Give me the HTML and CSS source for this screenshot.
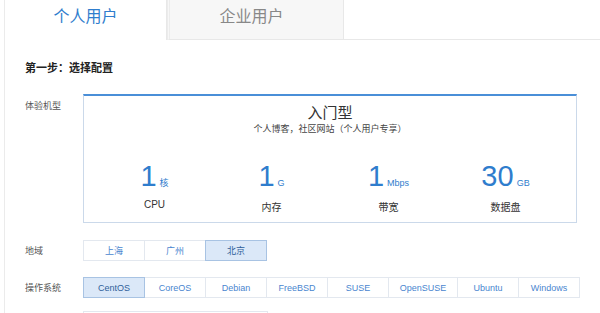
FILE: index.html
```html
<!DOCTYPE html>
<html lang="zh-CN">

<head>
    <meta charset="UTF-8">
    <title>选择配置</title>
    <link rel="stylesheet" href="styles.css">
</head>

<body>
    <div class="page">
        <div class="tabs">
            <div class="tab active">个人用户</div>
            <div class="tab">企业用户</div>
            <div class="tab-rest"></div>
        </div>
        <div class="content">
            <h3 class="step">第一步：选择配置</h3>
            <div class="row">
                <div class="label">体验机型</div>
                <div class="card">
                    <div class="card-title">入门型</div>
                    <div class="card-desc">个人博客，社区网站（个人用户专享）</div>
                    <div class="specs">
                        <div class="spec">
                            <div class="value">1<span class="unit">核</span></div>
                            <div class="name">CPU</div>
                        </div>
                        <div class="spec">
                            <div class="value">1<span class="unit">G</span></div>
                            <div class="name">内存</div>
                        </div>
                        <div class="spec">
                            <div class="value">1<span class="unit">Mbps</span></div>
                            <div class="name">带宽</div>
                        </div>
                        <div class="spec">
                            <div class="value">30<span class="unit">GB</span></div>
                            <div class="name">数据盘</div>
                        </div>
                    </div>
                </div>
            </div>
            <div class="row row-btns">
                <div class="label">地域</div>
                <div class="btn-group">
                    <span class="opt">上海</span>
                    <span class="opt">广州</span>
                    <span class="opt selected">北京</span>
                </div>
            </div>
            <div class="row row-btns">
                <div class="label">操作系统</div>
                <div class="btn-group">
                    <span class="opt selected">CentOS</span>
                    <span class="opt">CoreOS</span>
                    <span class="opt">Debian</span>
                    <span class="opt">FreeBSD</span>
                    <span class="opt">SUSE</span>
                    <span class="opt wide">OpenSUSE</span>
                    <span class="opt">Ubuntu</span>
                    <span class="opt">Windows</span>
                </div>
            </div>
            <div class="row row-btns row-last">
                <div class="label"></div>
                <div class="select-box"></div>
            </div>
        </div>
    </div>
</body>

</html>
```

FILE: styles.css
```css
/* 全局样式 */
body {
    margin: 0;
    font-family: "Liberation Sans", "Noto Sans CJK SC", sans-serif;
    background-color: #fff;
    color: #333;
    overflow: hidden;
}

.page {
    margin-left: 4px;
    border-left: 1px solid #ebebeb;
    height: 313px;
    overflow: hidden;
}

/* 标签页 */
.tabs {
    display: flex;
    height: 40px;
}

.tab {
    width: 162px;
    font-size: 16px;
    line-height: 34px;
    text-align: center;
    color: #888;
    background-color: #f7f7f7;
    border-bottom: 1px solid #e8e8e8;
    box-sizing: border-box;
}

.tab.active {
    color: #2f7dcd;
    background-color: #fff;
    border-bottom: none;
    border-right: 1px solid #e8e8e8;
}

.tab + .tab {
    width: 177px;
    border-left: 3px double #ececec;
    border-right: 1px solid #e8e8e8;
    padding-right: 10px;
}

.tab-rest {
    flex: 1;
    border-bottom: 1px solid #e8e8e8;
}

/* 内容 */
.content {
    padding-left: 20px;
}

.step {
    margin: 19px 0 19px;
    font-size: 11px;
    font-weight: bold;
    color: #222;
}

.row {
    display: flex;
}

.label {
    width: 58px;
    flex-shrink: 0;
    font-size: 9px;
    color: #555;
    padding-top: 5px;
}

/* 机型卡片 */
.card {
    width: 494px;
    height: 129px;
    box-sizing: border-box;
    border: 1px solid #cbd9ea;
    border-top: 2px solid #4a8fd8;
    text-align: center;
}

.card-title {
    margin-top: 5px;
    font-size: 15px;
    color: #333;
}

.card-desc {
    margin-top: 0;
    font-size: 9px;
    color: #444;
}

.specs {
    display: flex;
    margin-top: 28px;
    padding: 0 12px;
}

.spec {
    flex: 1;
}

.value {
    font-size: 29px;
    line-height: 27px;
    color: #2f7dcd;
}

.unit {
    font-size: 9px;
    margin-left: 3px;
}

.name {
    font-size: 10px;
    color: #333;
    margin-top: 2px;
}

/* 按钮组 */
.row-btns {
    align-items: center;
    margin-top: 17px;
}

.row-btns + .row-btns {
    margin-top: 16px;
}

.row-btns + .row-last {
    margin-top: 13px;
}

.row-btns .label {
    padding-top: 0;
}

.btn-group {
    display: flex;
}

.opt {
    width: 62px;
    height: 21px;
    line-height: 21px;
    box-sizing: border-box;
    border: 1px solid #e3e8ef;
    margin-left: -1px;
    text-align: center;
    font-size: 9px;
    color: #4a86cf;
    background-color: #fff;
}

.opt:first-child {
    margin-left: 0;
}

.opt.wide {
    width: 70px;
}

.opt.selected {
    background-color: #dbe8f8;
    border-color: #a8c3e3;
    color: #2f5f9a;
    position: relative;
}

.select-box {
    width: 185px;
    height: 21px;
    box-sizing: border-box;
    border: 1px solid #e3e8ef;
}
```
